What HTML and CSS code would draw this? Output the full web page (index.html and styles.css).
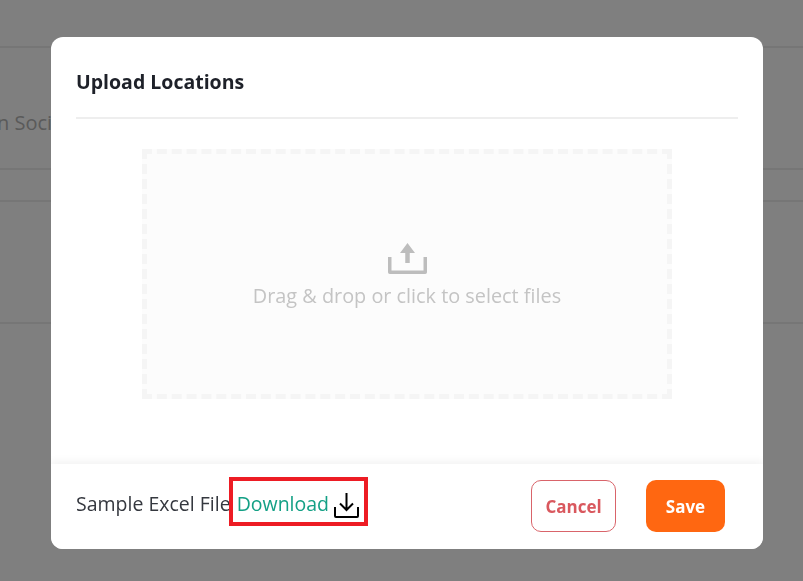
FILE: index.html
```html
<!DOCTYPE html>
<html lang="en">
<head>
<meta charset="utf-8">
<title>Upload Locations</title>
<link rel="stylesheet" href="styles.css">
</head>
<body>
<div class="page">
  <div class="row row-a"></div>
  <div class="row row-b"><span class="row-text">n Social</span></div>
  <div class="row row-c"></div>
  <div class="row row-d"></div>
</div>
<div class="overlay">
  <div class="modal">
    <div class="modal-body">
      <h2 class="title">Upload Locations</h2>
      <div class="dropzone">
        <svg class="upload-icon" width="39" height="31" viewBox="0 0 39 31">
          <path d="M1.750 14v15.250h35.500V14" fill="none" stroke="#bdbdbd" stroke-width="3.500" stroke-linejoin="round"/>
          <path d="M19.500 0l7.500 10h-5.250v10h-4.500V10H12z" fill="#bdbdbd"/>
        </svg>
        <p class="drop-text">Drag &amp; drop or click to select files</p>
      </div>
    </div>
    <div class="modal-footer">
      <div class="sample">
        <span class="sample-label">Sample Excel File</span>
        <a class="download" href="#">
          <span class="download-text">Download</span>
          <svg class="download-icon" width="25" height="25" viewBox="0 0 25 25">
            <path d="M12.500 0v17M6 10.500l6.500 6.500 6.500-6.500" fill="none" stroke="#000" stroke-width="2"/>
            <path d="M1 14v9a1 1 0 0 0 1 1h21a1 1 0 0 0 1-1v-9" fill="none" stroke="#000" stroke-width="2"/>
          </svg>
        </a>
      </div>
      <div class="actions">
        <button class="btn btn-cancel" type="button">Cancel</button>
        <button class="btn btn-save" type="button">Save</button>
      </div>
    </div>
  </div>
</div>
</body>
</html>
```
FILE: styles.css
```css
* { box-sizing: border-box; }
html, body { margin: 0; height: 100%; overflow: hidden; }
body { background: #fff; font-family: "Open Sans", "Noto Sans", sans-serif; }

.page { height: 581px; }
.row { border-bottom: 2px solid #ededed; }
.row-a { height: 48px; }
.row-b { height: 122px; padding-top: 61px; overflow: hidden; }
.row-c { height: 32px; }
.row-d { height: 122px; }
.row-text { display: block; font-size: 20px; line-height: 28px; color: #b4b4b4; margin-left: -3px; white-space: nowrap; }

.overlay {
  position: fixed;
  inset: 0;
  background: rgba(0, 0, 0, 0.5);
  display: flex;
  justify-content: flex-start;
  padding: 37px 0 0 51px;
}
.modal {
  width: 712px;
  height: 512px;
  background: #fff;
  border-radius: 12px;
  display: flex;
  flex-direction: column;
  overflow: hidden;
}
.modal-body { height: 427px; padding: 0 25px; }
.title {
  margin: 0;
  height: 82px;
  border-bottom: 2px solid #eee;
  padding-top: 32px;
  font-size: 19.500px;
  line-height: 26px;
  font-weight: 700;
  color: #1e2129;
}
.dropzone {
  width: 530px;
  height: 250px;
  margin: 30px 0 0 66px;
  background: #fcfcfc;
  border: 5px dashed #f5f5f5;
  display: flex;
  flex-direction: column;
  align-items: center;
  padding-top: 89px;
}
.upload-icon { display: block; flex: none; }
.drop-text { margin: 9px 0 0; font-size: 19.850px; line-height: 26px; color: #c4c4c4; white-space: nowrap; }

.modal-footer {
  height: 85px;
  background: #fff;
  box-shadow: 0 -3px 8px rgba(0, 0, 0, 0.05);
  display: flex;
  align-items: flex-start;
  justify-content: space-between;
  padding: 16px 38px 0 25px;
}
.sample { display: flex; align-items: flex-start; margin-top: -3px; }
.sample-label { font-size: 19.500px; line-height: 26px; margin-top: 14px; color: #35383f; white-space: nowrap; }
.download {
  display: flex;
  align-items: flex-start;
  gap: 5px;
  height: 49px;
  margin-left: -2px;
  padding: 0 5px 0 4px;
  border: 4px solid #ed1c24;
  color: #13a085;
  font-size: 19.500px;
  line-height: 26px;
  text-decoration: none;
}
.download-text { margin-top: 10px; }
.download-icon { margin-top: 12px; flex: none; }
.actions { display: flex; gap: 30px; }
.btn {
  height: 52px;
  border-radius: 10px;
  font-family: inherit;
  font-size: 17px;
  font-weight: 700;
}
.btn-cancel { width: 85px; background: #fff; border: 1px solid #d9646a; color: #d9585e; padding: 0; }
.btn-save { width: 79px; background: #ff6711; border: 0; color: #fff; padding: 0; }
```
